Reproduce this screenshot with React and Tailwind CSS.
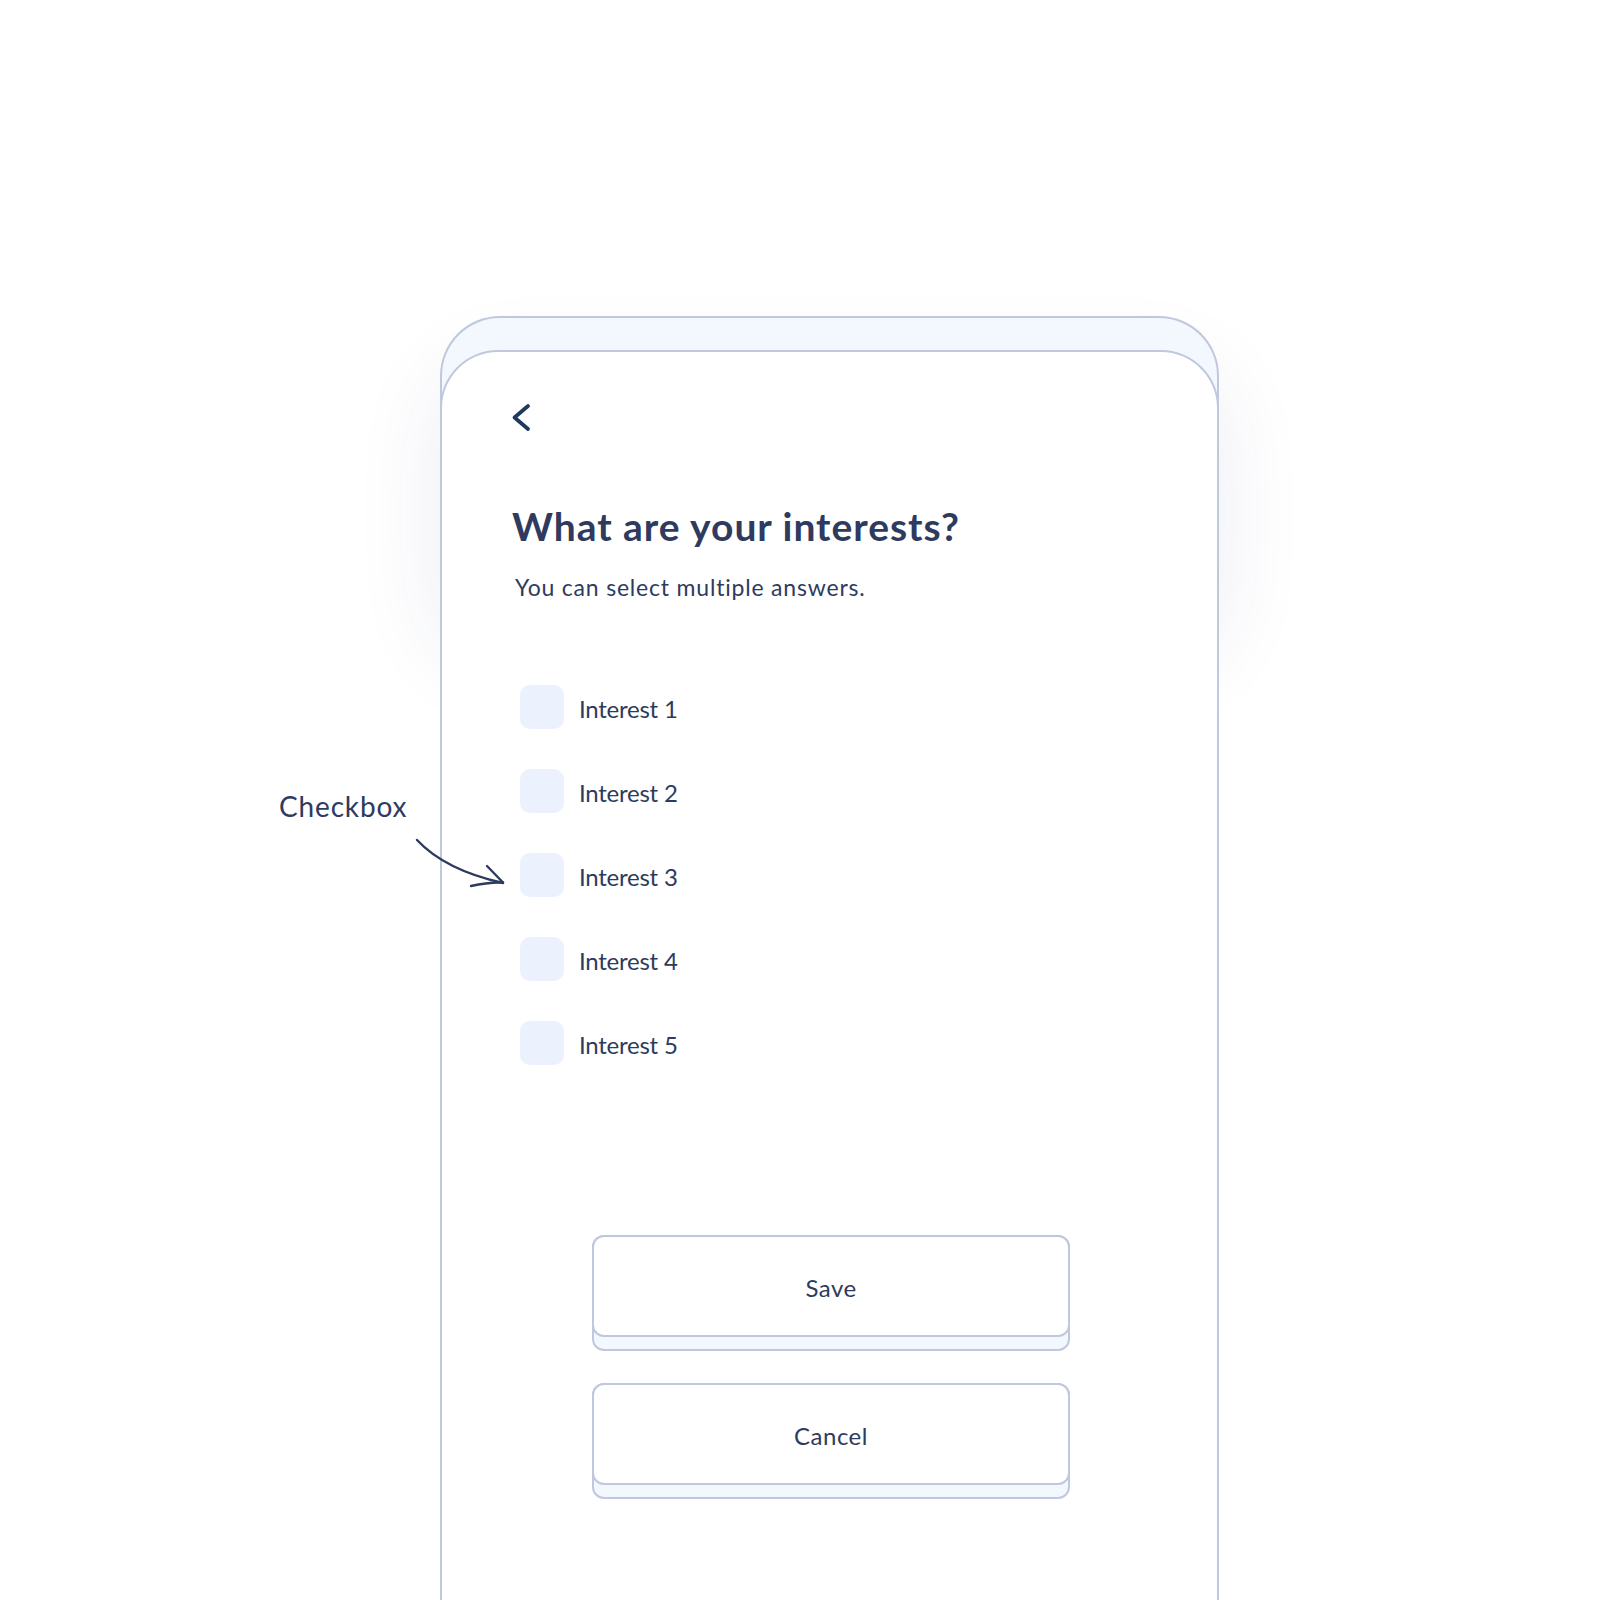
import React from "react";

const interests = ["Interest 1", "Interest 2", "Interest 3", "Interest 4", "Interest 5"];

function BackChevron() {
  return (
    <svg width="24" height="30" viewBox="0 0 24 30" className="block">
      <path
        d="M19 4 L5.5 15.5 L19 27"
        fill="none"
        stroke="#1f3a5e"
        strokeWidth="3.8"
        strokeLinecap="round"
        strokeLinejoin="round"
      />
    </svg>
  );
}

function Checkbox({ label }) {
  return (
    <label className="flex items-center gap-[15px]">
      <span className="block h-[44px] w-[44px] rounded-[10px] bg-[#ebf2fe]" />
      <span className="mt-[3px] text-[24px] leading-[30px] tracking-[-0.01em] text-[#2e3b5e]">{label}</span>
    </label>
  );
}

function RaisedButton({ children }) {
  return (
    <button className="block w-[478px] rounded-[12px] border-2 border-[#bfc8dc] bg-[#f3f7fe] pb-[12px] text-left">
      <span className="-mx-[2px] -mt-[2px] flex h-[102px] items-center justify-center rounded-[12px] border-2 border-[#bfc8dc] bg-white pt-[4px] text-[24px] tracking-[0.02em] text-[#2e3b5e]">
        {children}
      </span>
    </button>
  );
}

export default function App() {
  return (
    <div
      className="relative h-[1600px] w-[1600px] overflow-hidden bg-white"
      style={{ fontFamily: "Lato, 'Open Sans', sans-serif" }}
    >
      {/* soft glow behind the top of the device */}
      <div className="absolute left-[440px] top-[370px] h-[290px] w-[779px] rounded-[60px] shadow-[0_0_90px_rgba(40,60,120,0.09)]" />

      <div className="relative pl-[440px] pt-[316px]">
        <div className="w-[779px] rounded-t-[60px] border-2 border-b-0 border-[#bfc8dc] bg-[#f3f7fe] pt-[32px]">
          <div className="-mx-[2px] h-[1260px] rounded-t-[58px] border-2 border-b-0 border-[#bfc8dc] bg-white pl-[70px]">
            <div className="ml-[-3px] mt-[50px]">
              <BackChevron />
            </div>
            <h1 className="mt-[71px] text-[39px] font-bold leading-[46px] tracking-[0.025em] text-[#2e3b5e]">
              What are your interests?
            </h1>
            <p className="ml-[3px] mt-[24px] text-[23px] leading-[28px] tracking-[0.035em] text-[#2e3b5e]">
              You can select multiple answers.
            </p>
            <div className="ml-[8px] mt-[84px] flex flex-col gap-[40px]">
              {interests.map((t) => (
                <Checkbox key={t} label={t} />
              ))}
            </div>
            <div className="ml-[80px] mt-[170px] flex flex-col gap-[32px]">
              <RaisedButton>Save</RaisedButton>
              <RaisedButton>Cancel</RaisedButton>
            </div>
          </div>
        </div>
      </div>

      {/* annotation pointing at a checkbox */}
      <div className="absolute left-[279px] top-[789px] z-10 text-[28px] leading-[34px] tracking-[0.03em] text-[#2e3b5e]">
        Checkbox
      </div>
      <svg className="absolute left-[400px] top-[820px] z-10" width="120" height="80" viewBox="0 0 120 80">
        <g fill="none" stroke="#2e3b5e" strokeWidth="2.4" strokeLinecap="round" strokeLinejoin="round">
          <path d="M17 20 Q45 50 103 63" />
          <path d="M87 46 L103 62.5" />
          <path d="M71 66 Q88 62 103 62.5" />
        </g>
      </svg>
    </div>
  );
}
